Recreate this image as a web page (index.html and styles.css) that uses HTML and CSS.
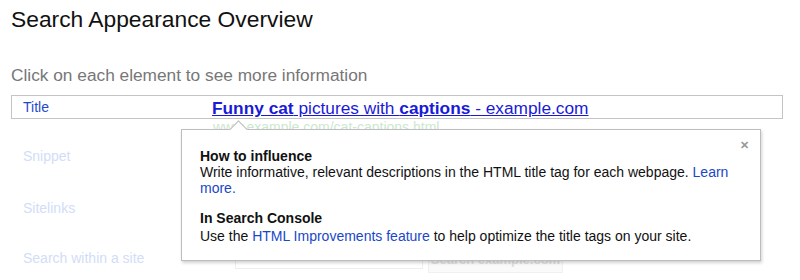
FILE: index.html
```html
<!DOCTYPE html>
<html>
<head>
<meta charset="utf-8">
<link rel="stylesheet" href="styles.css">
</head>
<body>
<div class="page">
  <h1 class="heading">Search Appearance Overview</h1>
  <p class="sub">Click on each element to see more information</p>
  <div class="rows">
    <div class="row row-title">
      <div class="label label-active">Title</div>
      <div class="content title-content"><a class="serp-title" href="#"><b>Funny cat</b> pictures with <b>captions</b> - example.com</a></div>
    </div>
    <div class="row row-snippet">
      <div class="label label-faded">Snippet</div>
      <div class="content">
        <div class="serp-url">www.example.com/cat-captions.html</div>
        <div class="serp-snippet">Funny cat pictures with captions. Updated daily with the best cats of the web.</div>
      </div>
    </div>
    <div class="row row-sitelinks">
      <div class="label label-faded">Sitelinks</div>
      <div class="content"></div>
    </div>
    <div class="row row-search">
      <div class="label label-faded">Search within a site</div>
      <div class="content search-content">
        <div class="search-input"></div>
        <div class="search-btn">Search example.com</div>
      </div>
    </div>
  </div>
  <div class="popup">
    <span class="close">&#x2715;</span>
    <div class="pop-section">
      <div class="pop-head">How to influence</div>
      <div class="pop-text">Write informative, relevant descriptions in the HTML title tag for each webpage. <a href="#" class="link">Learn more.</a></div>
    </div>
    <div class="pop-section">
      <div class="pop-head">In Search Console</div>
      <div class="pop-text">Use the <a href="#" class="link">HTML Improvements feature</a> to help optimize the title tags on your site.</div>
    </div>
  </div>
</div>
</body>
</html>
```

FILE: styles.css
```css
html, body {
  margin: 0;
  padding: 0;
  background: #fff;
  overflow: hidden;
}
body {
  font-family: "Liberation Sans", Arial, Helvetica, sans-serif;
  color: #222;
}
.page {
  position: relative;
  width: 800px;
  height: 280px;
  padding: 0 0 0 11px;
  box-sizing: border-box;
}
.heading {
  margin: 0;
  padding-top: 7px;
  font-size: 22.8px;
  font-weight: normal;
  line-height: 24px;
  color: #111;
}
.sub {
  margin: 0;
  padding-top: 35px;
  font-size: 17.3px;
  line-height: 18px;
  color: #777;
}
.rows {
  margin-top: 11px;
  width: 772px;
}
.row {
  display: flex;
}
.label {
  width: 189px;
  padding-left: 12px;
  font-size: 14px;
  line-height: 16px;
  flex-shrink: 0;
}
.label-active {
  color: #1f49cc;
}
.label-faded {
  color: #d2ddf7;
}
.row-title {
  border: 1px solid #c4c4c4;
  height: 22px;
  align-items: center;
}
.row-title .label {
  padding-left: 11px;
  line-height: 22px;
}
.title-content {
  padding-top: 2px;
}
.serp-title {
  font-size: 17.3px;
  line-height: 22px;
  color: #1a1ad6;
  text-decoration: underline;
}
.row-snippet {
  height: 52px;
}
.row-snippet .label {
  padding-top: 29px;
}
.row-snippet .content {
  padding-left: 1px;
}
.serp-url {
  font-size: 14px;
  line-height: 16px;
  color: #cde8cf;
}
.serp-snippet {
  font-size: 13px;
  line-height: 16px;
  color: #e6e6e6;
}
.row-sitelinks {
  height: 51px;
}
.row-sitelinks .label {
  padding-top: 29px;
}
.row-search {
  height: 60px;
}
.row-search .label {
  padding-top: 28px;
}
.search-content {
  display: flex;
  gap: 5px;
  padding-top: 25px;
  padding-left: 23px;
  align-items: flex-start;
}
.search-input {
  width: 186px;
  height: 20px;
  border: 1px solid #eeeeee;
}
.search-btn {
  width: 133px;
  height: 24px;
  border: 1px solid #f0f0f0;
  background: #fafafa;
  color: #e0e0e0;
  font-size: 13px;
  font-weight: bold;
  line-height: 24px;
  text-align: center;
}
.popup {
  position: absolute;
  left: 181px;
  top: 129px;
  width: 542px;
  padding: 18px 18px 16px 18px;
  border: 1px solid #bdbdbd;
  background: #fff;
  box-shadow: 1px 2px 3px rgba(0, 0, 0, 0.18);
}
.popup::before {
  content: "";
  position: absolute;
  left: 50px;
  top: -7px;
  width: 12px;
  height: 12px;
  background: #fff;
  border-left: 1px solid #bdbdbd;
  border-top: 1px solid #bdbdbd;
  transform: rotate(45deg);
}
.close {
  position: absolute;
  right: 11px;
  top: 9px;
  font-size: 11px;
  line-height: 12px;
  color: #999;
  font-weight: bold;
}
.pop-section + .pop-section {
  margin-top: 14px;
}
.pop-head {
  font-size: 14px;
  line-height: 16px;
  font-weight: bold;
  color: #111;
}
.pop-text {
  font-size: 14px;
  line-height: 16px;
  color: #111;
}
.pop-section + .pop-section .pop-text {
  margin-top: 2px;
}
.link {
  color: #1a47c8;
  text-decoration: none;
}
```
